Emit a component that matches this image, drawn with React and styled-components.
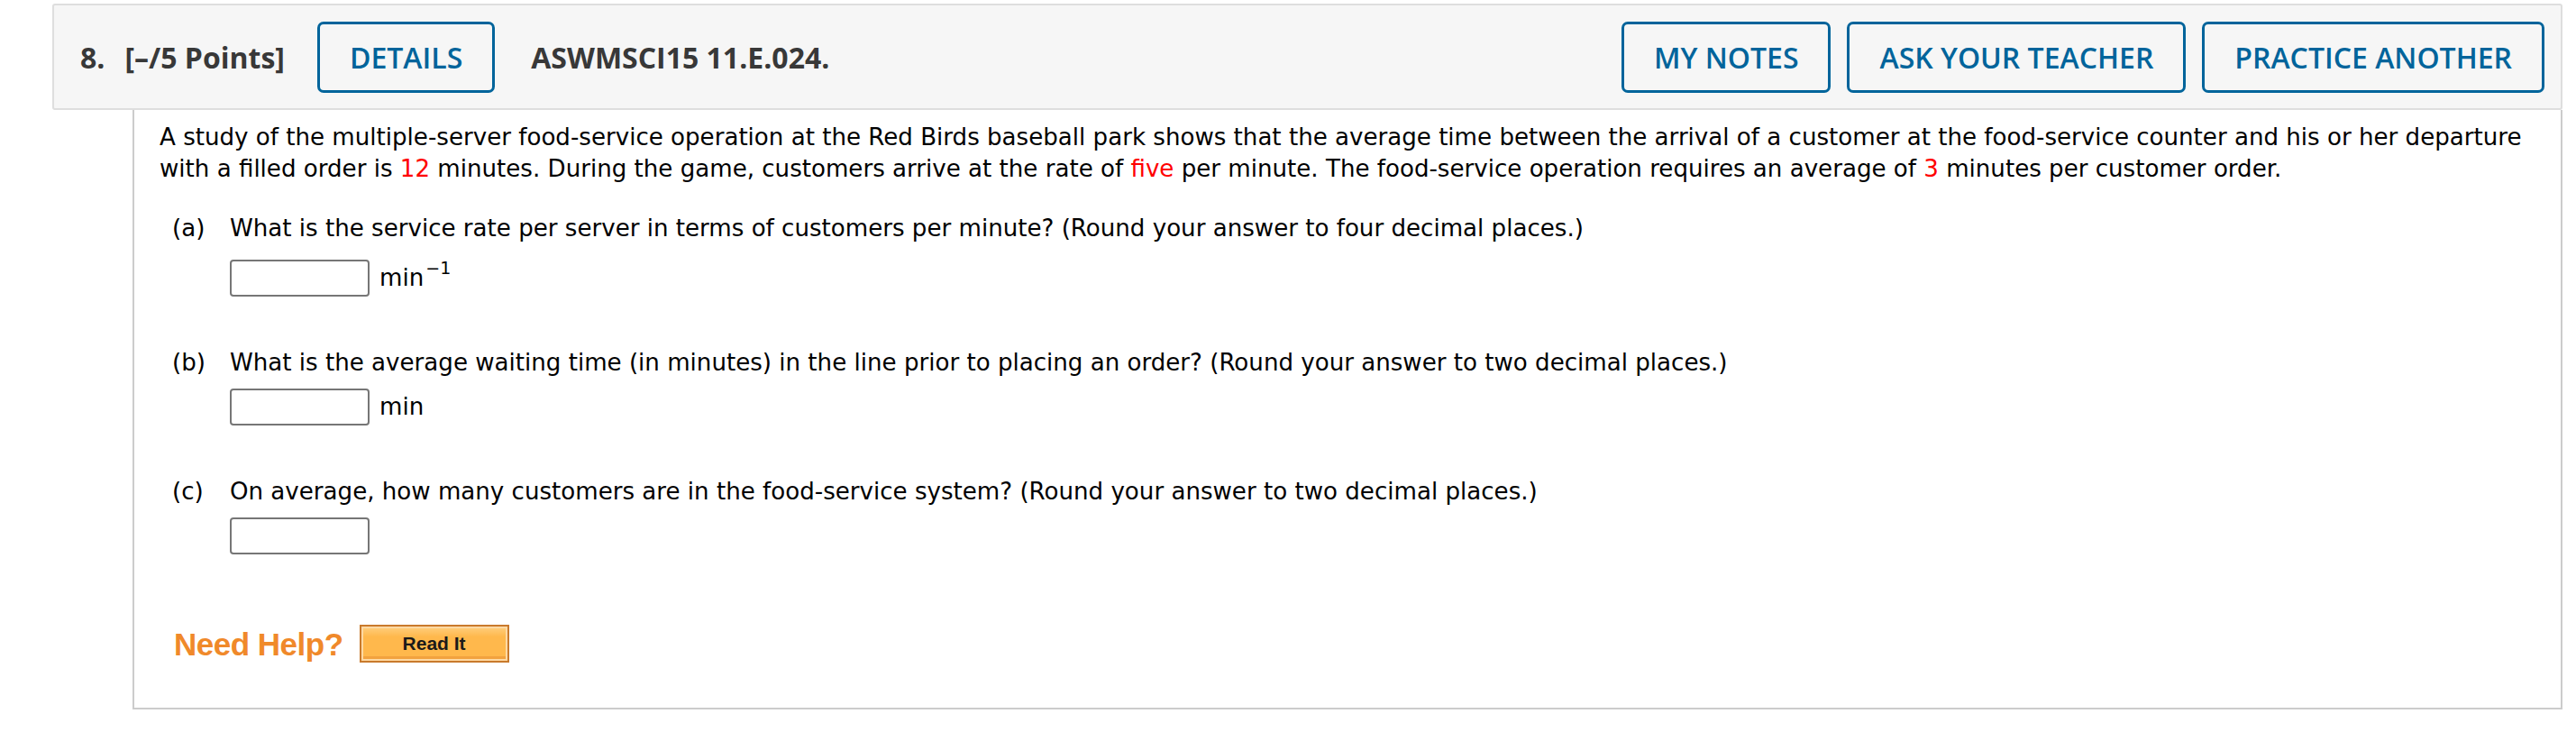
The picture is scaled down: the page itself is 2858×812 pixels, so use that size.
import React from "react";
import styled, { createGlobalStyle } from "styled-components";

const GlobalStyle = createGlobalStyle`
  html, body {
    margin: 0;
    padding: 0;
    background: #ffffff;
  }
`;

const Page = styled.div`
  padding: 4px 15px 0 58px;
`;

const Header = styled.div`
  display: flex;
  align-items: center;
  height: 118px;
  box-sizing: border-box;
  padding: 0 18px 0 29px;
  background: #f6f6f6;
  border: 2px solid #dedede;
  border-radius: 3px;
  font-family: "Open Sans", "Liberation Sans", sans-serif;
  color: #383838;
`;

const QNum = styled.span`
  font-size: 32px;
  font-weight: 700;
  margin-right: 22px;
`;

const Points = styled.span`
  font-size: 32px;
  font-weight: 700;
  margin-right: 36px;
`;

const Code = styled.span`
  font-size: 32px;
  font-weight: 700;
  margin-left: 40px;
`;

const Actions = styled.div`
  display: flex;
  gap: 18px;
  margin-left: auto;
`;

const OutlineButton = styled.button`
  display: inline-flex;
  align-items: center;
  justify-content: center;
  flex-shrink: 0;
  height: 79px;
  box-sizing: border-box;
  padding: 0 33px;
  background: transparent;
  border: 3px solid #00649b;
  border-radius: 7px;
  color: #00649b;
  font-family: "Open Sans", "Liberation Sans", sans-serif;
  font-size: 32px;
  font-weight: 600;
  text-transform: uppercase;
  cursor: pointer;
`;

const Panel = styled.div`
  margin-left: 89px;
  padding: 13px 20px 50px 28px;
  border: 2px solid #cccccc;
  border-top: none;
  font-family: Verdana, "DejaVu Sans", sans-serif;
  font-size: 26.1px;
  line-height: 35px;
  color: #000000;
`;

const Intro = styled.p`
  margin: 0;
`;

const Given = styled.span`
  color: #ff0000;
`;

const Part = styled.div`
  display: grid;
  grid-template-columns: 64px 1fr;
  margin: ${(p) => p.$top}px 0 0 14px;
`;

const Label = styled.span``;

const Question = styled.div``;

const AnswerRow = styled.div`
  display: flex;
  align-items: center;
  gap: 11px;
  margin-top: ${(p) => (p.$raised ? 17 : 11)}px;
`;

const AnswerBox = styled.input`
  width: 155px;
  height: 41px;
  box-sizing: border-box;
  border: 2px solid #767676;
  border-radius: 4px;
  background: #ffffff;
  margin: 0;
`;

const Unit = styled.span`
  line-height: 35px;
`;

const Sup = styled.sup`
  font-size: 19px;
  line-height: 0;
  vertical-align: 13px;
  margin-left: 2px;
`;

const HelpRow = styled.div`
  display: flex;
  align-items: center;
  gap: 18px;
  margin: 78px 0 0 16px;
`;

const NeedHelp = styled.span`
  font-family: "Liberation Sans", Arial, sans-serif;
  font-weight: 700;
  font-size: 35px;
  color: #f0892a;
  letter-spacing: -0.5px;
`;

const ReadIt = styled.button`
  width: 166px;
  height: 42px;
  box-sizing: border-box;
  border: 2px solid #c97a2c;
  box-shadow: inset 0 0 0 2px #ffd9a3, inset 0 -3px 0 2px #f2a23f;
  background: linear-gradient(#ffcf7f 0%, #ffb84c 30%, #ffb84c 100%);
  font-family: "Liberation Sans", Arial, sans-serif;
  font-weight: 700;
  font-size: 21px;
  color: #1a1a1a;
  padding: 0;
  cursor: pointer;
`;

const parts = [
  {
    label: "(a)",
    top: 31,
    text: "What is the service rate per server in terms of customers per minute? (Round your answer to four decimal places.)",
    unit: "min",
    sup: "\u22121",
  },
  {
    label: "(b)",
    top: 56,
    text: "What is the average waiting time (in minutes) in the line prior to placing an order? (Round your answer to two decimal places.)",
    unit: "min",
  },
  {
    label: "(c)",
    top: 56,
    text: "On average, how many customers are in the food-service system? (Round your answer to two decimal places.)",
  },
];

export default function App() {
  return (
    <>
      <GlobalStyle />
      <Page>
        <Header>
          <QNum>8.</QNum>
          <Points>[–/5 Points]</Points>
          <OutlineButton>Details</OutlineButton>
          <Code>ASWMSCI15 11.E.024.</Code>
          <Actions>
            <OutlineButton>My Notes</OutlineButton>
            <OutlineButton>Ask Your Teacher</OutlineButton>
            <OutlineButton>Practice Another</OutlineButton>
          </Actions>
        </Header>
        <Panel>
          <Intro>
            A study of the multiple-server food-service operation at the Red
            Birds baseball park shows that the average time between the arrival
            of a customer at the food-service counter and his or her departure
            <br />
            with a filled order is <Given>12</Given> minutes. During the game,
            customers arrive at the rate of <Given>five</Given> per minute. The
            food-service operation requires an average of <Given>3</Given>{" "}
            minutes per customer order.
          </Intro>
          {parts.map((p) => (
            <Part key={p.label} $top={p.top}>
              <Label>{p.label}</Label>
              <Question>
                {p.text}
                <AnswerRow $raised={!!p.sup}>
                  <AnswerBox type="text" />
                  {p.unit && (
                    <Unit>
                      {p.unit}
                      {p.sup && <Sup>{p.sup}</Sup>}
                    </Unit>
                  )}
                </AnswerRow>
              </Question>
            </Part>
          ))}
          <HelpRow>
            <NeedHelp>Need Help?</NeedHelp>
            <ReadIt>Read It</ReadIt>
          </HelpRow>
        </Panel>
      </Page>
    </>
  );
}
